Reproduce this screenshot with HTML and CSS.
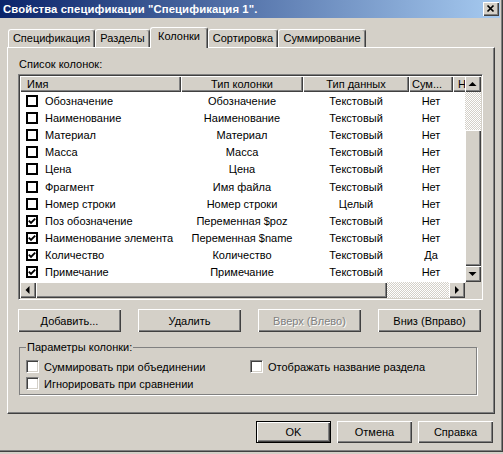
FILE: index.html
```html
<!DOCTYPE html>
<html>
<head>
<meta charset="utf-8">
<title>Свойства спецификации</title>
<link rel="stylesheet" href="styles.css">
</head>
<body>
<div class="window">
  <div class="titlebar">
    <span class="title">Свойства спецификации "Спецификация 1".</span>
    <span class="close"><svg width="16" height="14" viewBox="0 0 16 14"><path d="M4.5 3.5 L10.5 9.5 M10.5 3.5 L4.5 9.5" stroke="#000" stroke-width="1.7" fill="none"/></svg></span>
  </div>
  <div class="tabs">
    <div class="tab t1">Спецификация</div>
    <div class="tab t2">Разделы</div>
    <div class="tab active t3">Колонки</div>
    <div class="tab t4">Сортировка</div>
    <div class="tab t5">Суммирование</div>
  </div>
  <div class="panel">
    <div class="label">Список колонок:</div>
    <div class="list">
      <div class="view">
        <div class="row head">
          <div class="hc name">Имя</div>
          <div class="hc c">Тип колонки</div>
          <div class="hc c">Тип данных</div>
          <div class="hc sum">Сум...</div>
          <div class="hc last">Н</div>
        </div>
        <div class="row"><div class="nm"><span class="cb"></span>Обозначение</div><div class="c">Обозначение</div><div class="c">Текстовый</div><div class="c">Нет</div><div></div></div>
        <div class="row"><div class="nm"><span class="cb"></span>Наименование</div><div class="c">Наименование</div><div class="c">Текстовый</div><div class="c">Нет</div><div></div></div>
        <div class="row"><div class="nm"><span class="cb"></span>Материал</div><div class="c">Материал</div><div class="c">Текстовый</div><div class="c">Нет</div><div></div></div>
        <div class="row"><div class="nm"><span class="cb"></span>Масса</div><div class="c">Масса</div><div class="c">Текстовый</div><div class="c">Нет</div><div></div></div>
        <div class="row"><div class="nm"><span class="cb"></span>Цена</div><div class="c">Цена</div><div class="c">Текстовый</div><div class="c">Нет</div><div></div></div>
        <div class="row"><div class="nm"><span class="cb"></span>Фрагмент</div><div class="c">Имя файла</div><div class="c">Текстовый</div><div class="c">Нет</div><div></div></div>
        <div class="row"><div class="nm"><span class="cb"></span>Номер строки</div><div class="c">Номер строки</div><div class="c">Целый</div><div class="c">Нет</div><div></div></div>
        <div class="row"><div class="nm"><span class="cb on"><svg width="8" height="8" viewBox="0 0 8 8"><path d="M0.8 3.6 L3 5.8 L7.2 1.6" stroke="#000" stroke-width="1.9" fill="none"/></svg></span>Поз обозначение</div><div class="c">Переменная $poz</div><div class="c">Текстовый</div><div class="c">Нет</div><div></div></div>
        <div class="row"><div class="nm"><span class="cb on"><svg width="8" height="8" viewBox="0 0 8 8"><path d="M0.8 3.6 L3 5.8 L7.2 1.6" stroke="#000" stroke-width="1.9" fill="none"/></svg></span>Наименование элемента</div><div class="c">Переменная $name</div><div class="c">Текстовый</div><div class="c">Нет</div><div></div></div>
        <div class="row"><div class="nm"><span class="cb on"><svg width="8" height="8" viewBox="0 0 8 8"><path d="M0.8 3.6 L3 5.8 L7.2 1.6" stroke="#000" stroke-width="1.9" fill="none"/></svg></span>Количество</div><div class="c">Количество</div><div class="c">Текстовый</div><div class="c">Да</div><div></div></div>
        <div class="row"><div class="nm"><span class="cb on"><svg width="8" height="8" viewBox="0 0 8 8"><path d="M0.8 3.6 L3 5.8 L7.2 1.6" stroke="#000" stroke-width="1.9" fill="none"/></svg></span>Примечание</div><div class="c">Примечание</div><div class="c">Текстовый</div><div class="c">Нет</div><div></div></div>
      </div>
      <div class="vscroll">
        <div class="sbtn"><svg width="16" height="16" viewBox="0 0 16 16"><polygon points="3.5,10 11.5,10 7.5,6" fill="#000"/></svg></div>
        <div class="track vt1"></div>
        <div class="thumb vthumb"></div>
        <div class="sbtn"><svg width="16" height="16" viewBox="0 0 16 16"><polygon points="3.5,6 11.5,6 7.5,10" fill="#000"/></svg></div>
      </div>
      <div class="hscroll">
        <div class="sbtn"><svg width="16" height="16" viewBox="0 0 16 16"><polygon points="9.5,4 9.5,12 5.5,8" fill="#000"/></svg></div>
        <div class="thumb hthumb"></div>
        <div class="track ht1"></div>
        <div class="sbtn"><svg width="16" height="16" viewBox="0 0 16 16"><polygon points="6,4 6,12 10,8" fill="#000"/></svg></div>
      </div>
      <div class="corner"></div>
    </div>
    <div class="btnrow">
      <div class="btn">Добавить...</div>
      <div class="btn">Удалить</div>
      <div class="btn disabled">Вверх (Влево)</div>
      <div class="btn">Вниз (Вправо)</div>
    </div>
    <fieldset class="group">
      <legend>Параметры колонки:</legend>
      <div class="opts">
        <div class="opt"><span class="cb3"></span>Суммировать при объединении</div>
        <div class="opt"><span class="cb3"></span>Отображать название раздела</div>
        <div class="opt"><span class="cb3"></span>Игнорировать при сравнении</div>
      </div>
    </fieldset>
  </div>
  <div class="footer">
    <div class="btn fb default">OK</div>
    <div class="btn fb">Отмена</div>
    <div class="btn fb">Справка</div>
  </div>
</div>
</body>
</html>
```
FILE: styles.css
```css
* { box-sizing: border-box; }
html, body { margin: 0; padding: 0; }
body {
  width: 503px;
  height: 454px;
  overflow: hidden;
  background: #d4d0c8;
  font-family: "Liberation Sans", Arial, sans-serif;
  font-size: 11px;
  color: #000;
}
.window {
  width: 503px;
  height: 452px;
  background: #d4d0c8;
  border-right: 1px solid #404040;
  border-bottom: 1px solid #404040;
  box-shadow: inset -1px -1px #808080;
  padding: 0 2px 2px 0;
  display: flex;
  flex-direction: column;
}
.titlebar {
  height: 18px;
  flex: none;
  background: linear-gradient(to right, #0a246a, #a6caf0);
  display: flex;
  align-items: center;
  justify-content: space-between;
  padding: 0 1px 0 3px;
}
.title {
  color: #fff;
  font-weight: bold;
  font-size: 11.3px;
  line-height: 18px;
  letter-spacing: 0.1px;
  white-space: nowrap;
}
.close {
  width: 16px;
  height: 14px;
  background: #d4d0c8;
  box-shadow: inset 1px 1px #fff, inset -1px -1px #404040, inset -2px -2px #808080;
  display: flex;
}
.tabs {
  margin-top: 9px;
  height: 20px;
  flex: none;
  display: flex;
  align-items: flex-end;
  padding-left: 8px;
}
.tab {
  height: 18px;
  border-top: 1px solid #fff;
  border-left: 1px solid #fff;
  border-right: 1px solid #404040;
  box-shadow: inset -1px 0 #808080;
  border-radius: 3px 3px 0 0;
  text-align: center;
  line-height: 16px;
  white-space: nowrap;
  background: #d4d0c8;
}
.tab.active {
  height: 21px;
  margin-bottom: -1px;
  position: relative;
  z-index: 1;
  line-height: 17px;
}
.t1 { width: 87px; }
.t2 { width: 55px; }
.t3 { width: 58px; }
.t4 { width: 70px; }
.t5 { width: 88px; }
.panel {
  flex: none;
  margin-left: 7px;
  width: 488px;
  height: 367px;
  border-top: 1px solid #fff;
  border-left: 1px solid #fff;
  border-right: 1px solid #404040;
  border-bottom: 1px solid #404040;
  box-shadow: inset -1px -1px #808080;
  padding: 9px 0 0 10px;
}
.label {
  line-height: 14px;
  padding-left: 1px;
}
.list {
  margin-top: 3px;
  width: 465px;
  height: 226px;
  border: 1px solid;
  border-color: #808080 #fff #fff #808080;
  box-shadow: inset 1px 1px #404040, inset -1px -1px #d4d0c8;
  padding: 1px;
  background: #fff;
  display: grid;
  grid-template-columns: 445px 16px;
  grid-template-rows: 206px 16px;
}
.view {
  overflow: hidden;
  background: #fff;
}
.row {
  display: grid;
  grid-template-columns: 161px 122px 106px 44px 12px;
  height: 17.2px;
  align-items: center;
  white-space: nowrap;
}
.row > div { overflow: hidden; }
.row.head {
  height: 16px;
  align-items: stretch;
}
.hc {
  background: #d4d0c8;
  box-shadow: inset 1px 1px #fff, inset -1px -1px #404040, inset -2px -2px #808080;
  line-height: 16px;
}
.hc.name { padding-left: 7px; }
.hc.sum { padding-left: 3px; }
.hc.last { padding-left: 5px; box-shadow: inset 1px 1px #fff, inset 0 -1px #404040, inset 0 -2px #808080; }
.c { text-align: center; }
.nm {
  display: flex;
  align-items: center;
  padding-left: 6px;
}
.cb {
  width: 12px;
  height: 12px;
  border: 2px solid #000;
  background: #fff;
  margin-right: 7px;
  flex: none;
  display: flex;
  align-items: center;
  justify-content: center;
}
.vscroll {
  display: flex;
  flex-direction: column;
}
.hscroll {
  display: flex;
}
.sbtn {
  width: 16px;
  height: 16px;
  flex: none;
  background: #d4d0c8;
  box-shadow: inset 1px 1px #fff, inset -1px -1px #404040, inset -2px -2px #808080;
  display: flex;
}
.track {
  background: repeating-conic-gradient(#fff 0 25%, #d4d0c8 0 50%) 0 0 / 2px 2px;
}
.vt1 { height: 38px; }
.vthumb { height: 136px; }
.hthumb { width: 351px; }
.ht1 { width: 62px; }
.thumb {
  background: #d4d0c8;
  box-shadow: inset 1px 1px #fff, inset -1px -1px #404040, inset -2px -2px #808080;
}
.corner { background: #d4d0c8; }
.btnrow {
  margin-top: 9px;
  display: flex;
  gap: 17px;
}
.btn {
  width: 103px;
  height: 23px;
  background: #d4d0c8;
  box-shadow: inset 1px 1px #fff, inset -1px -1px #404040, inset -2px -2px #808080;
  display: flex;
  align-items: center;
  justify-content: center;
  white-space: nowrap;
}
.btn.disabled {
  color: #808080;
  text-shadow: 1px 1px #fff;
}
.group {
  margin: 9px 0 0 1px;
  width: 458px;
  padding: 0 6px 2px 6px;
  border: 1px solid #808080;
  box-shadow: 1px 1px #fff;
  min-inline-size: 0;
}
.group legend {
  padding: 0 1px;
  line-height: 13px;
}
.opts {
  margin-top: 4px;
  display: grid;
  grid-template-columns: 224px 1fr;
  grid-auto-rows: 17px;
}
.opt {
  display: flex;
  align-items: center;
  gap: 5px;
  white-space: nowrap;
}
.cb3 {
  width: 13px;
  height: 13px;
  flex: none;
  background: #fff;
  border: 1px solid;
  border-color: #808080 #fff #fff #808080;
  box-shadow: inset 1px 1px #404040, inset -1px -1px #d4d0c8;
}
.footer {
  margin-top: 7px;
  display: flex;
  justify-content: flex-end;
  gap: 6px;
  padding-right: 7px;
}
.btn.fb {
  width: 75px;
  height: 22px;
}
.btn.default {
  border: 1px solid #000;
}
```
